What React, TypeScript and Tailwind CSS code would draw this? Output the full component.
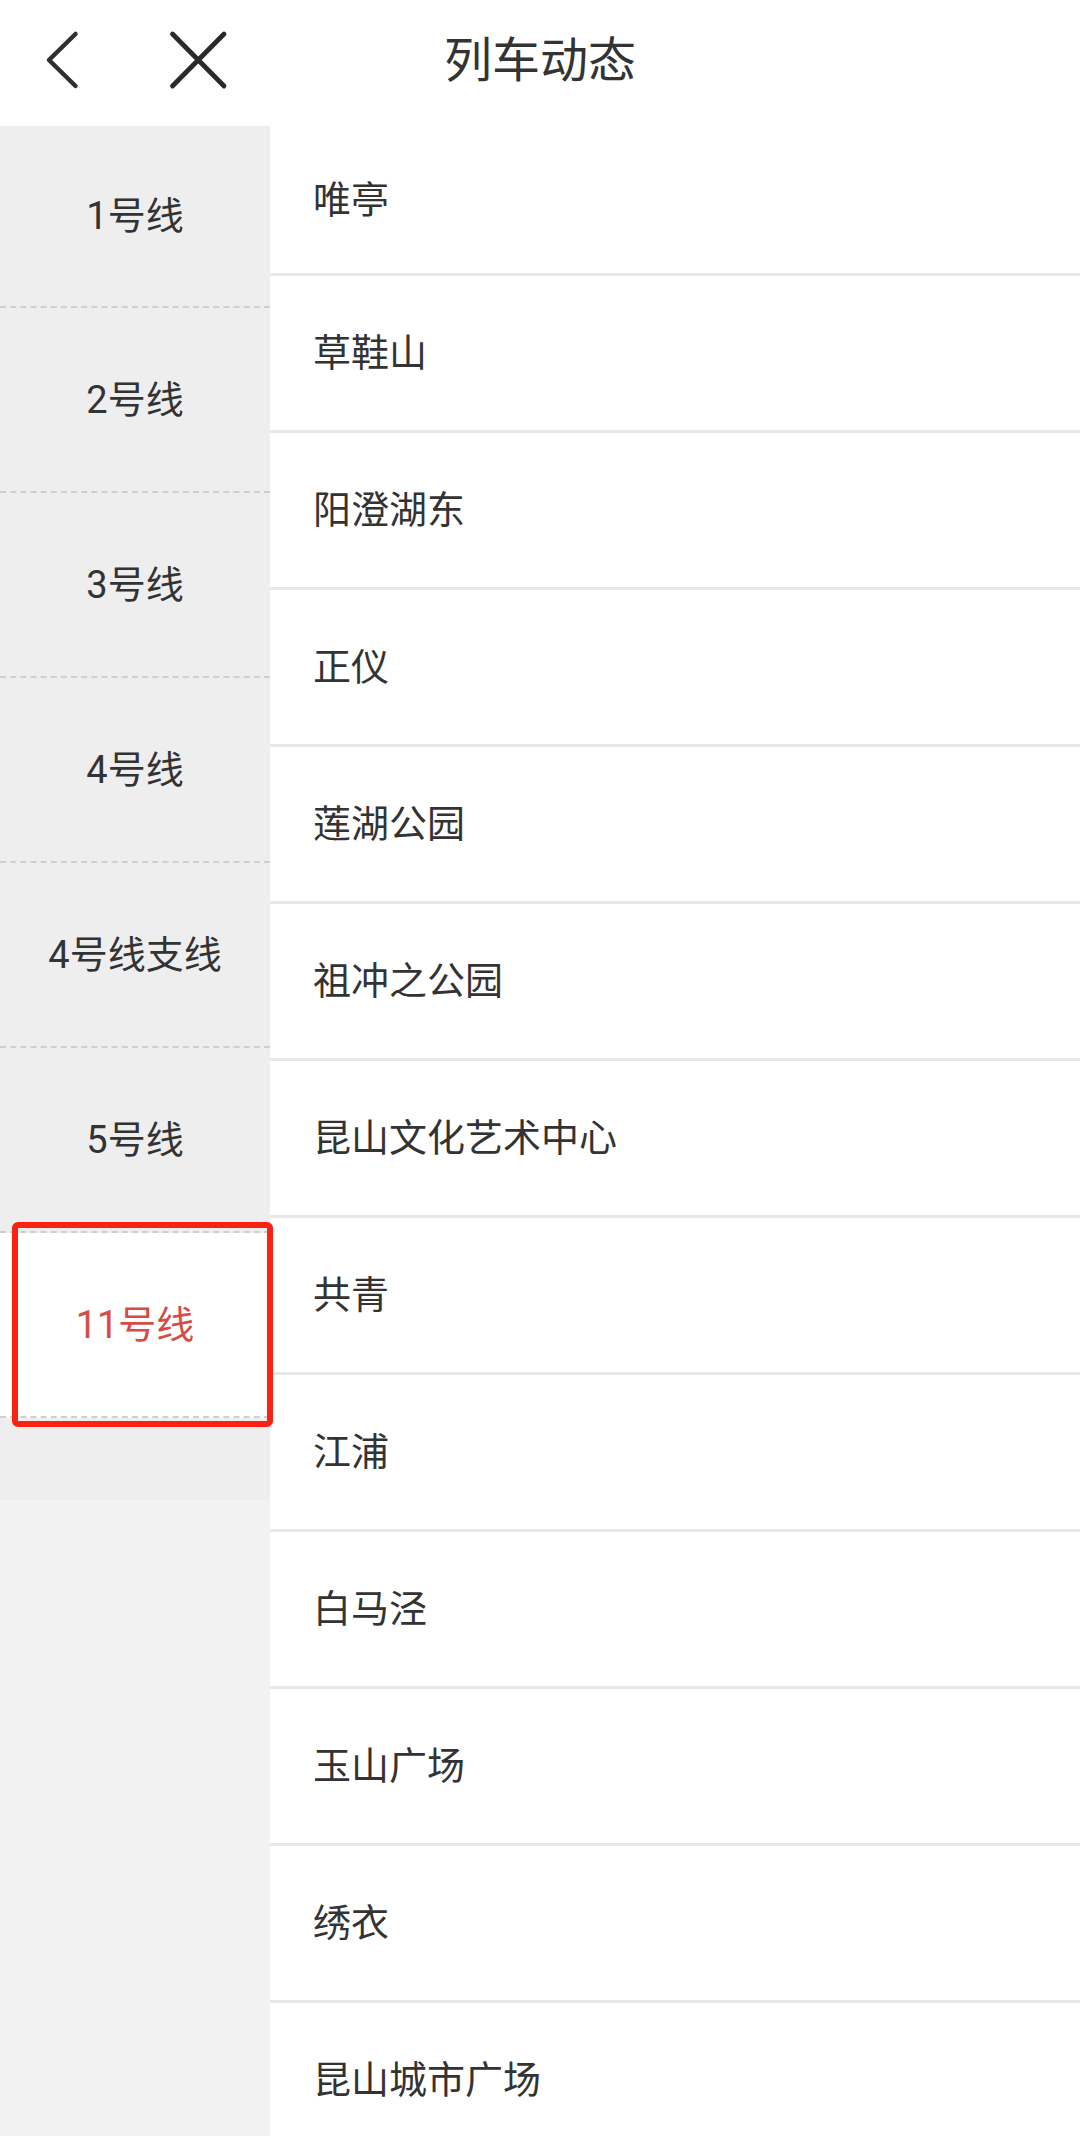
const lines = ["1号线", "2号线", "3号线", "4号线", "4号线支线", "5号线", "11号线"];

const stations = [
  "唯亭",
  "草鞋山",
  "阳澄湖东",
  "正仪",
  "莲湖公园",
  "祖冲之公园",
  "昆山文化艺术中心",
  "共青",
  "江浦",
  "白马泾",
  "玉山广场",
  "绣衣",
  "昆山城市广场",
];

const font = "font-['Roboto','Noto_Sans_CJK_SC',sans-serif]";

export default function App() {
  const active = "11号线";

  return (
    <div className={`w-[1080px] h-[2136px] overflow-hidden bg-white text-[#333] ${font}`}>
      {/* Header */}
      <div className="grid h-[126px] grid-cols-[1fr_auto_1fr] items-center bg-white">
        <div className="flex items-center gap-[84px] pl-[44px] pb-[6px]">
          <svg width="36" height="60" viewBox="0 0 36 60" fill="none">
            <path d="M31.5 4L5 30L31.5 56" stroke="#2f2f2f" strokeWidth="4.5" strokeLinecap="round" strokeLinejoin="round" />
          </svg>
          <svg width="68" height="60" viewBox="0 0 68 60" fill="none">
            <path d="M8.5 4L60 56M60 4L8.5 56" stroke="#2a2a2a" strokeWidth="4.8" strokeLinecap="round" />
          </svg>
        </div>
        <h1 className="pb-[4px] text-[48px] leading-none font-normal text-[#333]">列车动态</h1>
        <div />
      </div>

      <div className="flex">
        {/* Line selector */}
        <div className="relative w-[270px] shrink-0 self-stretch bg-[#f2f2f2]">
          <div className="bg-[#eeeeee] pb-[82px]">
            {lines.map((name, i) => {
              const on = name === active;
              return (
                <div
                  key={name}
                  className={`flex items-center justify-center border-b-2 border-dashed border-[#cfcfcf] ${
                    i === 0 ? "h-[182px]" : "h-[185px]"
                  } ${on ? "bg-white text-[#d64c45]" : "text-[#333]"}`}
                >
                  <span className="text-[38px] leading-none">{name}</span>
                </div>
              );
            })}
          </div>
          <div className="absolute left-[12px] top-[1096px] h-[205px] w-[261px] rounded-[6px] border-[6px] border-[#fb2113]" />
        </div>

        {/* Stations */}
        <div className="flex-1 bg-white">
          {stations.map((s, i) => (
            <div
              key={s}
              className={`flex items-center border-b-[3px] border-[#e8e8e8] pl-[43px] ${
                i === 0 ? "h-[150px]" : "h-[157px]"
              }`}
            >
              <span className="text-[38px] leading-none text-[#333]">{s}</span>
            </div>
          ))}
        </div>
      </div>
    </div>
  );
}
